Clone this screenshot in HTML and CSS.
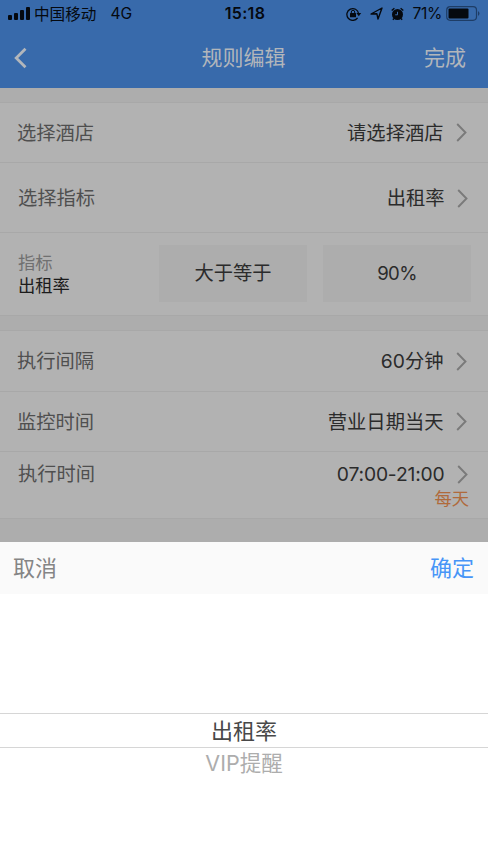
FILE: index.html
```html
<!DOCTYPE html>
<html lang="zh-CN">
<head>
<meta charset="utf-8">
<title>规则编辑</title>
<link rel="stylesheet" href="styles.css">
</head>
<body>
<header class="header">
  <div class="status">
    <div class="status-left">
      <svg class="signal" width="22" height="13" viewBox="0 0 22 13"><rect x="0" y="8" width="4" height="5" rx="1"/><rect x="6" y="6" width="4" height="7" rx="1"/><rect x="12" y="3" width="4" height="10" rx="1"/><rect x="18" y="0" width="4" height="13" rx="1"/></svg>
      <span class="carrier">中国移动</span>
      <span class="network">4G</span>
    </div>
    <span class="clock">15:18</span>
    <div class="status-right">
      <svg width="16" height="14" viewBox="0 0 16 14"><path d="M11.6 10.9A5.9 5.9 0 1 1 12.6 6.5" fill="none" stroke="currentColor" stroke-width="1.3"/><path d="M10.4 6h4.8l-2.4 3.2z"/><rect x="4" y="6" width="6" height="4.3" rx=".5"/><path d="M5.3 6.5V5a1.7 1.7 0 0 1 3.4 0v1.5" fill="none" stroke="currentColor"/></svg>
      <svg class="locate" width="13" height="13" viewBox="0 0 13 13"><path d="M1 7L12 1 8 12 6.9 6.8z" fill="none" stroke="currentColor" stroke-width="1.4" stroke-linejoin="round"/></svg>
      <svg class="alarm" width="13" height="14" viewBox="0 0 13 14"><circle cx="6.5" cy="7.5" r="5.5"/><path d="M.7 3.5L3.4 1.2M12.3 3.5L9.6 1.2M2.9 11.5l-1 1.3M10.1 11.5l1 1.3" fill="none" stroke="currentColor" stroke-width="1.4"/><path class="hands" d="M6.5 4.8v3H4.2"/></svg>
      <span class="percent">71%</span>
      <svg class="battery" width="35" height="15" viewBox="0 0 35 15"><rect x=".7" y=".7" width="29.8" height="13.6" rx="3.5" fill="none" stroke="#1e3d66" stroke-width="1.2"/><rect x="2.5" y="2.5" width="20" height="10" rx="1"/><path d="M32 5q3 2.5 0 5z" fill="#1e3d66"/></svg>
    </div>
  </div>
  <nav class="nav">
    <svg class="back" width="14" height="22" viewBox="0 0 14 22"><path d="M11.5 1.7L2.2 11l9.3 9.3"/></svg>
    <h1 class="title">规则编辑</h1>
    <span class="done">完成</span>
  </nav>
</header>
<main class="form">
  <section class="group">
    <div class="row row-hotel"><span class="label">选择酒店</span><span class="value">请选择酒店</span><svg class="chevron" viewBox="0 0 11 19"><path d="M1.2 1L9.5 9.5 1.2 18"/></svg></div>
    <div class="row row-metric"><span class="label">选择指标</span><span class="value">出租率</span><svg class="chevron" viewBox="0 0 11 19"><path d="M1.2 1L9.5 9.5 1.2 18"/></svg></div>
    <div class="row condition">
      <div class="metric"><span class="caption">指标</span><span class="name">出租率</span></div>
      <div class="box">大于等于</div>
      <div class="box rate">90%</div>
    </div>
  </section>
  <section class="group">
    <div class="row row-interval"><span class="label">执行间隔</span><span class="value">60分钟</span><svg class="chevron" viewBox="0 0 11 19"><path d="M1.2 1L9.5 9.5 1.2 18"/></svg></div>
    <div class="row row-monitor"><span class="label">监控时间</span><span class="value">营业日期当天</span><svg class="chevron" viewBox="0 0 11 19"><path d="M1.2 1L9.5 9.5 1.2 18"/></svg></div>
    <div class="row row-time">
      <div class="line"><span class="label">执行时间</span><span class="value hours">07:00-21:00</span><svg class="chevron" viewBox="0 0 11 19"><path d="M1.2 1L9.5 9.5 1.2 18"/></svg></div>
      <div class="repeat">每天</div>
    </div>
  </section>
</main>
<section class="sheet">
  <div class="toolbar"><span class="cancel">取消</span><span class="confirm">确定</span></div>
  <div class="picker">
    <div class="option selected">出租率</div>
    <div class="option next">VIP提醒</div>
  </div>
</section>
</body>
</html>
```
FILE: styles.css
```css
* { box-sizing: border-box; }
body {
  margin: 0;
  height: 867px;
  overflow: hidden;
  display: flex;
  flex-direction: column;
  background: #adadad;
  color: #2b2b2b;
  font-family: Inter, "Noto Sans CJK SC", sans-serif;
  font-size: 19.3px;
  line-height: 28px;
}
svg { display: block; flex: none; fill: currentColor; }
.header { height: 88px; flex: none; background: #386aab; }
.status {
  height: 27px;
  padding: 0 7px 0 8px;
  display: grid;
  grid-template-columns: 1fr auto 1fr;
  align-items: center;
  color: #05090f;
  font-size: 15.6px;
  line-height: 27px;
}
.status-left, .status-right { display: flex; align-items: center; }
.status-right { justify-content: flex-end; }
.signal { margin-top: -1px; }
.carrier { margin: 0 0 -1px 4px; padding-top: 1px; }
.network { margin-left: 14px; }
.clock { margin-left: 1px; font-weight: 600; font-size: 16px; letter-spacing: .3px; }
.locate { margin-left: 8px; }
.alarm { margin-left: 8px; }
.hands { fill: none; stroke: #386aab; stroke-width: 1; }
.percent { margin-left: 8px; letter-spacing: -.3px; }
.battery { margin-left: 4px; }
.nav {
  height: 61px;
  padding: 0 22px 0 14px;
  display: grid;
  grid-template-columns: 1fr auto 1fr;
  align-items: center;
  color: #b2b6bb;
  font-size: 21px;
}
.back path { fill: none; stroke: currentColor; stroke-width: 2.8; }
.title { margin: 0 0 0 7px; font-size: 21px; font-weight: 400; }
.done { text-align: right; }
.group { margin-top: 14px; background: #b2b2b2; border-top: 1px solid #a8a8a8; border-bottom: 1px solid #a8a8a8; }
.row { display: flex; align-items: center; padding: 0 21px 0 17px; border-bottom: 1px solid #a8a8a8; }
.row:last-child { border-bottom: 0; }
.label { flex: 1; color: #4f4f4f; }
.chevron { width: 11px; height: 19px; margin-left: 12.5px; }
.chevron path { fill: none; stroke: #7a7a7a; stroke-width: 1.9; }
.row-hotel { height: 60px; }
.row-metric { height: 70px; padding: 1px 20px 0 18px; }
.condition { height: 82px; padding-left: 18px; padding-right: 17px; padding-bottom: 1px; gap: 16px; }
.metric { width: 125px; display: flex; flex-direction: column; font-size: 17.3px; line-height: 23px; }
.caption { color: #707070; }
.name { color: #1c1c1c; }
.box { flex: 1; height: 57px; background: #adadad; text-align: center; line-height: 57px; }
.rate { font-size: 18.6px; letter-spacing: -.6px; line-height: 56px; }
.row-interval { height: 61px; }
.row-monitor { height: 60px; }
.row-time { height: 66px; display: block; padding: 8px 20px 0 18px; }
.hours { letter-spacing: -.18px; }
.line { display: flex; align-items: center; }
.repeat { margin: -1px -1px 0 0; text-align: right; color: #b06a3b; font-size: 17.3px; line-height: 23px; }
.sheet { height: 325px; flex: none; margin-top: auto; background: #fff; }
.toolbar {
  height: 52px;
  padding: 0 14px 0 13px;
  display: flex;
  align-items: center;
  justify-content: space-between;
  background: #fafafa;
  font-size: 22px;
}
.cancel { color: #858585; }
.confirm { color: #4795f7; }
.picker { padding-top: 119px; text-align: center; font-size: 22px; }
.selected { height: 35px; line-height: 35px; border-top: 1px solid #d6d6d6; border-bottom: 1px solid #d6d6d6; color: #484848; }
.next { color: #adadad; font-size: 21.5px; line-height: 31px; }
```
